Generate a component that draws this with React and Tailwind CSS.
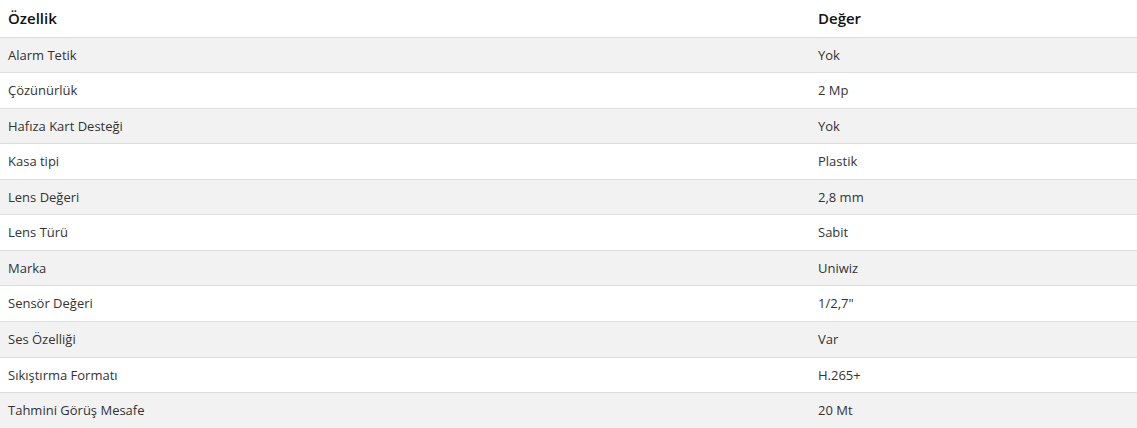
const rows = [
  ["Alarm Tetik", "Yok"],
  ["Çözünürlük", "2 Mp"],
  ["Hafıza Kart Desteği", "Yok"],
  ["Kasa tipi", "Plastik"],
  ["Lens Değeri", "2,8 mm"],
  ["Lens Türü", "Sabit"],
  ["Marka", "Uniwiz"],
  ["Sensör Değeri", '1/2,7"'],
  ["Ses Özelliği", "Var"],
  ["Sıkıştırma Formatı", "H.265+"],
  ["Tahmini Görüş Mesafe", "20 Mt"],
];

export default function App() {
  return (
    <div className="w-[1137px] bg-white" style={{ fontFamily: '"Open Sans", sans-serif' }}>
      <table className="w-full border-collapse text-[13px] leading-[1.42857] text-[#333]">
        <thead>
          <tr className="border-b border-[#ddd]">
            <th className="w-[810px] h-[37px] px-2 py-0 text-left text-[15px] font-semibold text-[#111]">Özellik</th>
            <th className="h-[37px] px-2 py-0 text-left text-[15px] font-semibold text-[#111]">Değer</th>
          </tr>
        </thead>
        <tbody>
          {rows.map(([k, v], idx) => (
            <tr
              key={idx}
              className={`border-t border-[#ddd] ${idx % 2 === 0 ? "bg-[#f2f2f2]" : "bg-white"}`}
            >
              <td className="px-2 py-2">{k}</td>
              <td className="px-2 py-2">{v}</td>
            </tr>
          ))}
        </tbody>
      </table>
    </div>
  );
}
